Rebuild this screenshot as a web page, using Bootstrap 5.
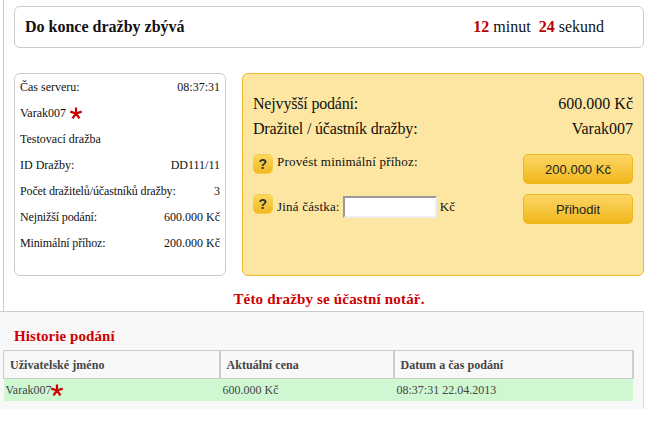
<!DOCTYPE html>
<html lang="cs">
<head>
<meta charset="UTF-8">
<link href="https://cdn.jsdelivr.net/npm/bootstrap@5.3.0/dist/css/bootstrap.min.css" rel="stylesheet">
<style>
    html, body { height: 431px; overflow: hidden; }
    body { font-family: "Liberation Serif", serif; font-size: 12px; color: #111; background: #fff; }
    .auction-main { margin-left: 3px; border-left: 1px solid #ccc; padding: 6px 3px 0 10px; height: 311px; }
    .timer-box { height: 42px; border: 1px solid #ccc; border-radius: 6px; padding: 0 39px 0 10px; font-size: 16px; }
    .timer-title { font-weight: bold; }
    .timer-num { font-weight: bold; color: #b00; }
    .panels { margin-top: 25px; height: 203px; gap: 16px; }
    .info-box { width: 212px; border: 1px solid #ccc; border-radius: 6px; padding: 0 5px; }
    .info-row { height: 26px; }
    .tight-label { letter-spacing: -.13px; }
    .bid-box { width: 402px; background: #fde6a2; border: 1px solid #f0b928; border-radius: 6px; padding: 17px 10px 0 10px; }
    .bid-row { font-size: 16px; height: 25px; }
    .bid-row .tight-label { letter-spacing: -.18px; }
    .bid-actions { margin-top: 13px; }
    .bid-line { font-size: 13px; letter-spacing: .2px; height: 40px; line-height: 14px; }
    .min-label { padding-top: 1px; }
    .help-btn { width: 20px; height: 20px; border-radius: 5px; background: linear-gradient(#fcd65c, #f0b922); border: 1px solid #f7cc55; font: bold 14px "Liberation Sans", sans-serif; color: #333; }
    .gold-btn { width: 110px; height: 30px; border: 1px solid #eeb822; border-radius: 5px; padding: 0; background: linear-gradient(#fdd665, #f0b71c); font: 13px "Liberation Sans", sans-serif; color: #222; }
    .amount-input { width: 94px; height: 22px; margin: 0 3px; border: 2px solid; border-color: #999 #eee #eee #999; background: #fff; }
    .amount-label { height: 26px; }
    .notary { font-size: 15px; font-weight: bold; letter-spacing: .17px; color: #c00; text-align: center; line-height: 17px; margin-top: 15px; }
    .history { height: 98px; margin-right: 3px; padding: 13px 0 0 3px; background: #f8f8f8; border-top: 1px solid #ccc; border-right: 1px solid #ddd; }
    .history-title { font-size: 15px; font-weight: bold; letter-spacing: .07px; color: #c00; margin: 0 0 3px 11px; line-height: 22px; }
    .bid-table { width: 631px; table-layout: fixed; border-collapse: collapse; color: #444; }
    .bid-table th { height: 28px; padding: 0 6px; border: 1px solid #ccc; border-width: 1px 2px 1px 0; font-size: 12px; letter-spacing: .05px; }
    .bid-table th:first-child { border-left: 1px solid #ccc; }
    .bid-table td { height: 22px; padding: 0 3px; background: #cff8d2; }
    .bid-table td:first-child { padding-left: 2px; }
    .star-mark { flex: none; }
</style>
</head>
<body>
<div class="auction-main">
    <div class="timer-box d-flex align-items-center justify-content-between">
        <span class="timer-title">Do konce dražby zbývá</span>
        <span><span class="timer-num">12</span> minut &nbsp;<span class="timer-num">24</span> sekund</span>
    </div>

    <div class="panels d-flex">
        <div class="info-box">
            <div class="info-row d-flex align-items-center justify-content-between"><span>Čas serveru:</span><span>08:37:31</span></div>
            <div class="info-row d-flex align-items-center gap-1"><span>Varak007</span>
                <svg class="star-mark" width="12" height="12" viewBox="0 0 12 12"><path d="M6 6.500V.5M6 6.500 11.700 4.600M6 6.500 9.500 11.400M6 6.500 2.500 11.400M6 6.500 .3 4.600" stroke="#c00" stroke-width="2.200"/></svg>
            </div>
            <div class="info-row d-flex align-items-center"><span>Testovací dražba</span></div>
            <div class="info-row d-flex align-items-center justify-content-between"><span>ID Dražby:</span><span>DD111/11</span></div>
            <div class="info-row d-flex align-items-center justify-content-between"><span class="tight-label">Počet dražitelů/účastníků dražby:</span><span>3</span></div>
            <div class="info-row d-flex align-items-center justify-content-between"><span class="tight-label">Nejnižší podání:</span><span>600.000 Kč</span></div>
            <div class="info-row d-flex align-items-center justify-content-between"><span class="tight-label">Minimální příhoz:</span><span>200.000 Kč</span></div>
        </div>

        <div class="bid-box">
            <div class="bid-row d-flex align-items-center justify-content-between"><span class="tight-label">Nejvyšší podání:</span><span>600.000 Kč</span></div>
            <div class="bid-row d-flex align-items-center justify-content-between"><span class="tight-label">Dražitel / účastník dražby:</span><span>Varak007</span></div>
            <div class="bid-actions">
                <div class="bid-line d-flex justify-content-between">
                    <div class="d-flex align-items-start gap-1"><span class="help-btn d-flex align-items-center justify-content-center">?</span><span class="min-label">Provést minimální příhoz:</span></div>
                    <button class="gold-btn">200.000 Kč</button>
                </div>
                <div class="bid-line d-flex justify-content-between">
                    <div class="d-flex align-items-start gap-1"><span class="help-btn d-flex align-items-center justify-content-center">?</span><span class="amount-label d-flex align-items-center">Jiná částka:<input class="amount-input" type="text">Kč</span></div>
                    <button class="gold-btn">Přihodit</button>
                </div>
            </div>
        </div>
    </div>
    <div class="notary">Této dražby se účastní notář.</div>
</div>

<div class="history">
    <div class="history-title">Historie podání</div>
    <table class="bid-table">
        <colgroup><col style="width:216px"><col style="width:174px"><col></colgroup>
        <thead><tr><th>Uživatelské jméno</th><th>Aktuální cena</th><th>Datum a čas podání</th></tr></thead>
        <tbody><tr>
            <td><span class="d-flex align-items-center">Varak007<svg class="star-mark" width="12" height="12" viewBox="0 0 12 12"><path d="M6 6.500V.5M6 6.500 11.700 4.600M6 6.500 9.500 11.400M6 6.500 2.500 11.400M6 6.500 .3 4.600" stroke="#c00" stroke-width="2.200"/></svg></span></td>
            <td>600.000 Kč</td>
            <td>08:37:31 22.04.2013</td>
        </tr></tbody>
    </table>
</div>
<script src="https://cdn.jsdelivr.net/npm/bootstrap@5.3.0/dist/js/bootstrap.bundle.min.js"></script>
</body>
</html>
